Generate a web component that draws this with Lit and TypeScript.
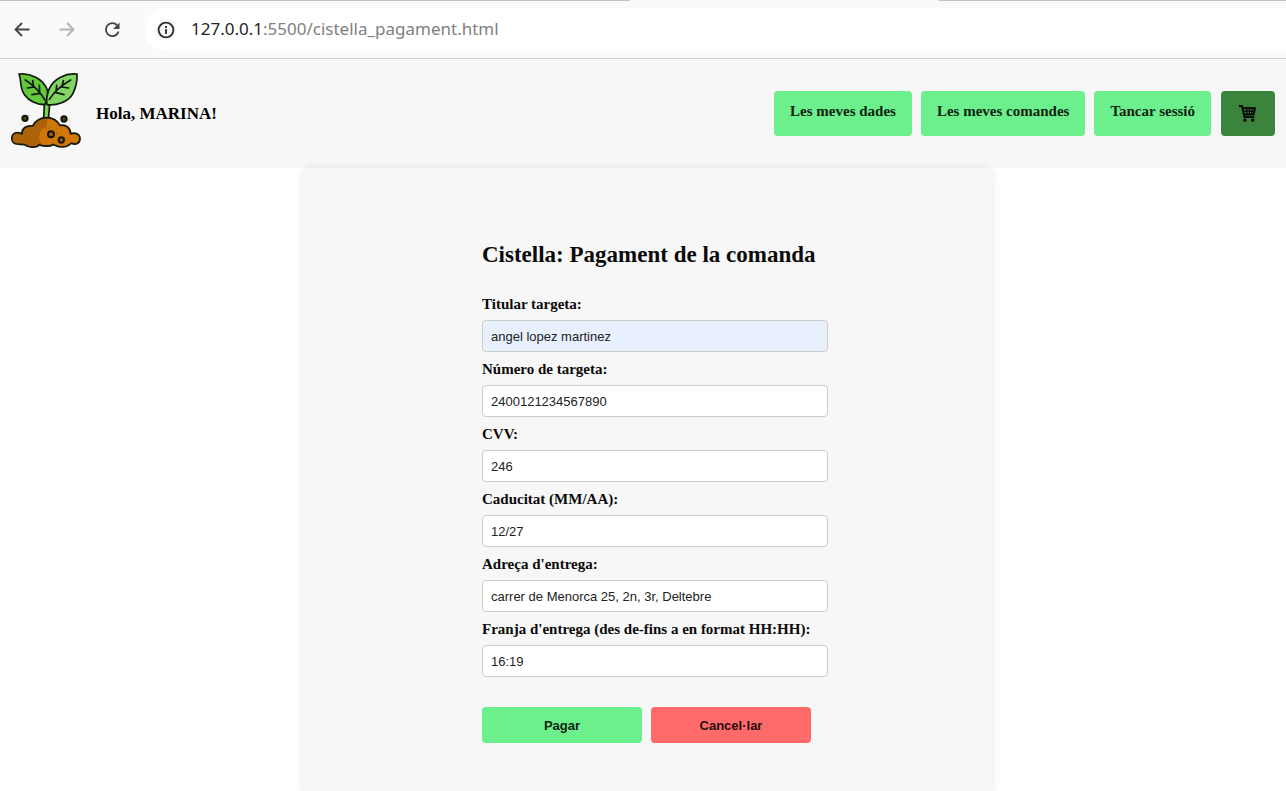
import { LitElement, html, css } from "lit";
import { customElement } from "lit/decorators.js";

@customElement("browser-bar")
class BrowserBar extends LitElement {
  static styles = css`
    :host {
      display: block;
      background: #fafafa;
      border-bottom: 1px solid #d0d0d0;
      font-family: "Noto Sans", sans-serif;
    }
    .edge {
      display: flex;
      justify-content: space-between;
      height: 1px;
    }
    .edge-left {
      width: 49%;
      background: #c4c4c4;
    }
    .edge-right {
      width: 27%;
      background: #c4c4c4;
    }
    .bar {
      display: flex;
      align-items: center;
      height: 57px;
      padding-left: 12px;
    }
    .nav {
      display: flex;
      width: 20px;
      height: 20px;
      margin-right: 25px;
      padding: 0;
      border: 0;
      background: none;
      color: #444;
    }
    .nav:disabled {
      color: #b4b4b4;
    }
    .address {
      flex: 1;
      display: flex;
      align-items: center;
      gap: 14px;
      height: 43px;
      margin-left: -2px;
      padding-left: 10px;
      border-radius: 22px 0 0 22px;
      background: #fff;
    }
    .info {
      display: flex;
      padding: 2px;
      border-radius: 50%;
      background: #fafafa;
      color: #333;
    }
    .url {
      font-size: 17px;
      line-height: 24px;
      padding-bottom: 1px;
      color: #808080;
    }
    .host {
      color: #262626;
    }
  `;
  render() {
    return html`
      <div class="edge"><span class="edge-left"></span><span class="edge-right"></span></div>
      <div class="bar">
        <button class="nav" aria-label="Enrere">
          <svg width="20" height="20" viewBox="0 0 20 20" fill="none" stroke="currentColor" stroke-width="1.8">
            <path d="M17.500 9.500H4M10 3L3.500 9.500L10 16" />
          </svg>
        </button>
        <button class="nav" aria-label="Endavant" disabled>
          <svg width="20" height="20" viewBox="0 0 20 20" fill="none" stroke="currentColor" stroke-width="1.8">
            <path d="M2.500 9.500H16M10 3L16.500 9.500L10 16" />
          </svg>
        </button>
        <button class="nav" aria-label="Actualitza">
          <svg width="20" height="20" viewBox="0 0 20 20" fill="none" stroke="currentColor" stroke-width="1.8">
            <path d="M16.600 11.500A6.500 6.500 0 1 1 15 5" />
            <path d="M17.500 2.500V9H11Z" fill="currentColor" stroke="none" />
          </svg>
        </button>
        <div class="address">
          <span class="info">
            <svg width="18" height="18" viewBox="0 0 18 18" fill="none" stroke="currentColor" stroke-width="1.9">
              <circle cx="9" cy="9" r="7.400" />
              <path d="M9 8V13M9 5V6.900" />
            </svg>
          </span>
          <span class="url"><span class="host">127.0.0.1</span>:5500/cistella_pagament.html</span>
        </div>
      </div>
    `;
  }
}

@customElement("shop-header")
class ShopHeader extends LitElement {
  static styles = css`
    :host {
      display: flex;
      align-items: center;
      justify-content: space-between;
      padding: 12px 11px;
      background: #f7f7f7;
      font: bold 15px/17px "Liberation Serif", serif;
      color: #000;
    }
    .brand {
      display: flex;
      align-items: center;
      gap: 15px;
      font-size: 17px;
    }
    .logo {
      width: 70px;
      height: 85px;
    }
    nav {
      display: flex;
      gap: 9px;
    }
    a {
      display: block;
      height: 17px;
      padding: 12px 16px 16px;
      border-radius: 4px;
      background: #6cf08e;
      color: #0c1f10;
      text-decoration: none;
    }
    .cart {
      margin-left: 1px;
      padding: 14px 19px 14px 18px;
      background: #3a843c;
      color: #000;
    }
    .cart svg {
      display: block;
    }
  `;
  render() {
    return html`
      <div class="brand">
        <svg class="logo" viewBox="33 213 210 255" fill="none" stroke="#10180c" stroke-width="5" stroke-linecap="round" stroke-linejoin="round" role="img" aria-label="Planta">
          <path fill="#7ccf57" d="M133 312L131 356H146C145 338 150 326 148 312L143 290Z" />
          <path fill="#64c83c" d="M57 222C90 218 130 236 142 270C145 286 142 302 134 314C110 314 86 302 74 285C57 262 66 244 57 222Z" />
          <path fill="#82d562" d="M231 222C198 218 160 236 147 268C141 284 138 300 141 314C168 318 206 306 219 280C229 260 232 240 231 222Z" />
          <path stroke-width="5" d="M76 240C98 254 120 274 136 302M98 242L101 259M82 264L102 261M118 256L119 276M96 284L120 280M212 240C188 254 162 276 148 298M190 242L186 259M206 264L186 261M170 256L168 276M192 284L168 278" />
          <path fill="#ab6208" d="M50 432C30 430 30 398 52 398C58 398 64 400 66 402C64 385 80 375 98 378C108 360 125 353 140 353C158 353 172 362 180 376C198 372 212 384 212 402C225 396 240 402 240 416C240 430 228 436 214 430C206 436 198 442 186 441C174 442 168 436 160 434C150 440 125 440 118 434C112 442 88 446 74 434C66 432 58 434 50 432Z" />
          <path fill="#cf7707" stroke="none" d="M143 357C158 357 170 366 178 380C197 376 209 388 209 406C224 400 237 405 237 416C236 428 226 431 213 426C205 434 197 438 186 437C174 438 168 432 160 430C146 436 128 434 122 428C112 408 120 388 138 381Z" />
          <circle cx="153" cy="403" r="9" fill="#a55c0c" stroke-width="6" />
          <circle cx="184" cy="420" r="8" fill="#a55c0c" stroke-width="6" />
          <circle cx="75" cy="355" r="8" fill="#5d3a20" stroke-width="6" />
          <circle cx="192" cy="357" r="8" fill="#5d3a20" stroke-width="6" />
          <path stroke="#eab78c" stroke-width="4" d="M62 372h1M86 346h1M208 360h1M208 375h1" />
          <path stroke="#8f4f08" stroke-width="3" d="M138 384h1M146 384h1M168 388h1M170 400h1" />
        </svg>
        <span>Hola, MARINA!</span>
      </div>
      <nav>
        <a href="#dades">Les meves dades</a>
        <a href="#comandes">Les meves comandes</a>
        <a href="#sortir">Tancar sessió</a>
        <a class="cart" href="#cistella" aria-label="Cistella">
          <svg width="17" height="17" viewBox="0 0 18 18" fill="none" stroke="currentColor" stroke-width="1.200" stroke-linejoin="round" stroke-linecap="round">
            <path stroke-width="2" d="M.8 1H3.200L5.800 12.800H15.500M3.800 3.300H17L15.500 10H5.200" />
            <path d="M4.800 6.500H16M8 3.500L8.500 9.500M11 3.500V9.500M14 3.500L13.300 9.500" />
            <circle cx="6.300" cy="16" r="1.200" fill="currentColor" />
            <circle cx="14.500" cy="16" r="1.200" fill="currentColor" />
          </svg>
        </a>
      </nav>
    `;
  }
}

interface Field {
  id: string;
  label: string;
  value: string;
  filled?: boolean;
}

const FIELDS: Field[] = [
  { id: "titular", label: "Titular targeta:", value: "angel lopez martinez", filled: true },
  { id: "numero", label: "Número de targeta:", value: "2400121234567890" },
  { id: "cvv", label: "CVV:", value: "246" },
  { id: "caducitat", label: "Caducitat (MM/AA):", value: "12/27" },
  { id: "adreca", label: "Adreça d'entrega:", value: "carrer de Menorca 25, 2n, 3r, Deltebre" },
  { id: "franja", label: "Franja d'entrega (des de-fins a en format HH:HH):", value: "16:19" },
];

@customElement("payment-form")
class PaymentForm extends LitElement {
  static styles = css`
    :host {
      display: block;
      box-sizing: border-box;
      width: 100%;
      max-width: 690px;
      padding: 73px 164px 46px 180px;
      border-radius: 8px 8px 0 0;
      background: #f7f7f7;
      box-shadow: 0 0 9px rgba(0, 0, 0, 0.1);
      font-family: "Liberation Serif", serif;
      color: #0a0a0a;
    }
    h1 {
      margin: 0 0 27px;
      font-size: 23px;
      line-height: 28px;
    }
    .fields {
      display: grid;
      gap: 9px;
    }
    label {
      display: block;
      margin-bottom: 7px;
      font-size: 15px;
      line-height: 17px;
      font-weight: bold;
      white-space: nowrap;
    }
    input {
      display: block;
      box-sizing: border-box;
      width: 100%;
      height: 32px;
      padding: 0 8px;
      border: 1px solid #ccc;
      border-radius: 4px;
      background: #fff;
      color: #222;
      font: 13px "Liberation Sans", sans-serif;
    }
    .filled {
      background: #e8f0fe;
    }
    .actions {
      display: flex;
      gap: 9px;
      margin-top: 30px;
      padding-right: 17px;
    }
    button {
      flex: 1;
      height: 36px;
      border: 0;
      border-radius: 4px;
      background: #6cf08e;
      color: #0c1f10;
      font: bold 13px "Liberation Sans", sans-serif;
    }
    .cancel {
      background: #ff6b6b;
      color: #260c0c;
    }
  `;
  render() {
    return html`
      <h1>Cistella: Pagament de la comanda</h1>
      <form @submit=${(e: Event) => e.preventDefault()}>
        <div class="fields">
          ${FIELDS.map(
            (f) => html`
              <div>
                <label for=${f.id}>${f.label}</label>
                <input id=${f.id} class=${f.filled ? "filled" : ""} type="text" .value=${f.value} />
              </div>
            `
          )}
        </div>
        <div class="actions">
          <button type="submit">Pagar</button>
          <button type="button" class="cancel">Cancel·lar</button>
        </div>
      </form>
    `;
  }
}

@customElement("app-root")
class AppRoot extends LitElement {
  static styles = css`
    :host {
      display: flex;
      flex-direction: column;
      min-height: 100vh;
      background: #fff;
    }
    main {
      flex: 1;
      display: flex;
      justify-content: center;
      padding-left: 8px;
      overflow-x: clip;
    }
  `;
  render() {
    return html`
      <browser-bar></browser-bar>
      <shop-header></shop-header>
      <main><payment-form></payment-form></main>
    `;
  }
}
